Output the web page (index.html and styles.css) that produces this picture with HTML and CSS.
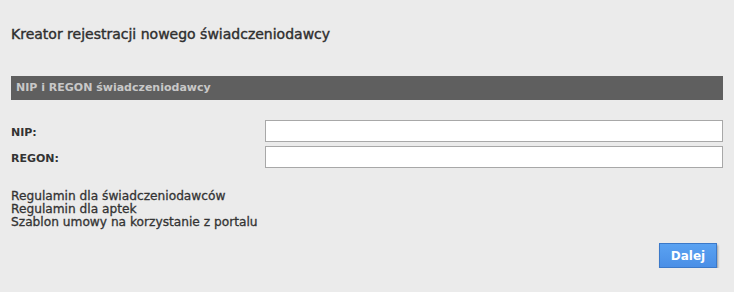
FILE: index.html
```html
<!DOCTYPE html>
<html lang="pl">
<head>
<meta charset="utf-8">
<title>Kreator rejestracji</title>
<link rel="stylesheet" href="styles.css">
</head>
<body>
<div class="page">
  <h1 class="title">Kreator rejestracji nowego świadczeniodawcy</h1>
  <div class="section-head">NIP i REGON świadczeniodawcy</div>
  <div class="form">
    <label class="label" for="nip">NIP:</label>
    <input class="field" id="nip" type="text">
    <label class="label" for="regon">REGON:</label>
    <input class="field" id="regon" type="text">
  </div>
  <div class="links">
    <a class="link" href="#">Regulamin dla świadczeniodawców</a>
    <a class="link" href="#">Regulamin dla aptek</a>
    <a class="link" href="#">Szablon umowy na korzystanie z portalu</a>
  </div>
  <div class="actions">
    <button class="btn" type="button">Dalej</button>
  </div>
</div>
</body>
</html>
```
FILE: styles.css
```css
html, body {
  margin: 0;
  padding: 0;
  background: #ebebeb;
}
body {
  font-family: "DejaVu Sans", Verdana, sans-serif;
  color: #333;
}
.page {
  padding: 0 11px;
}
.title {
  margin: 0;
  padding-top: 26px;
  font-size: 14px;
  line-height: 16px;
  font-weight: normal;
  color: #2f2f2f;
  -webkit-text-stroke: 0.4px #2f2f2f;
}
.section-head {
  margin-top: 34px;
  height: 24px;
  line-height: 24px;
  background: #5f5f5f;
  color: #c8c8c8;
  font-size: 11px;
  font-weight: bold;
  padding-left: 5px;
}
.form {
  margin-top: 20px;
  display: grid;
  grid-template-columns: 254px 1fr;
  row-gap: 4px;
  align-items: center;
}
.label {
  font-size: 11px;
  font-weight: bold;
  color: #333;
  padding-top: 2px;
}
.field {
  box-sizing: border-box;
  height: 22px;
  width: 458px;
  margin: 0;
  border: 1px solid #a8a8a8;
  background: #fff;
  padding: 0 3px;
}
.links {
  margin-top: 22px;
  display: flex;
  flex-direction: column;
}
.link {
  font-size: 12.2px;
  line-height: 13px;
  color: #333;
  text-decoration: none;
  -webkit-text-stroke: 0.3px #333;
}
.actions {
  margin-top: 14px;
  display: flex;
  justify-content: flex-end;
  padding-right: 6px;
}
.btn {
  box-sizing: border-box;
  width: 58px;
  height: 25px;
  border: 1px solid #3b79c9;
  background: linear-gradient(#5aa2f2, #4a8fe6);
  color: #fff;
  font-family: "DejaVu Sans", Verdana, sans-serif;
  font-weight: bold;
  font-size: 12px;
  padding: 0;
  box-shadow: 1px 2px 2px rgba(0, 0, 0, 0.35);
  cursor: pointer;
}
```
